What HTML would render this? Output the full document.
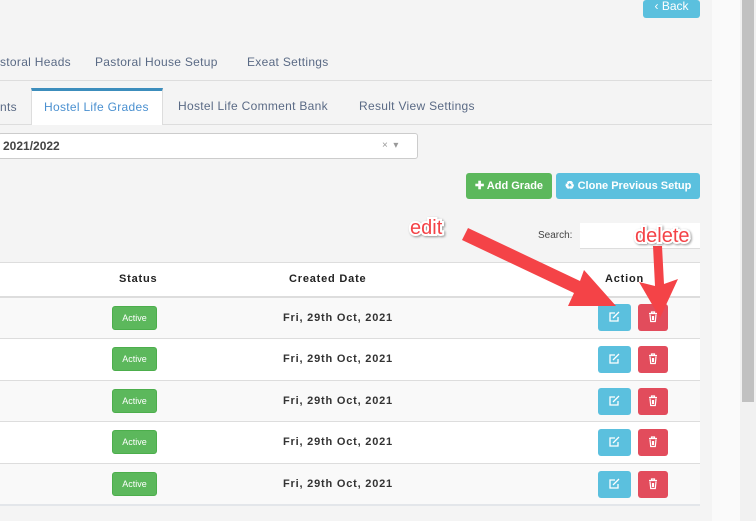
<!DOCTYPE html>
<html><head><style>
*{margin:0;padding:0;box-sizing:border-box}
body{width:756px;height:521px;background:#f4f4f4;font-family:"Liberation Sans",sans-serif;position:relative;overflow:hidden}
.abs{position:absolute}
.tab{position:absolute;font-size:12px;color:#5a6a85;letter-spacing:.3px}
.btn{position:absolute;color:#fff;font-size:11px;font-weight:bold;border-radius:3px;text-align:center}
.row{position:absolute;left:0;width:700px;border-bottom:1px solid #ddd}
.badge{position:absolute;left:112px;width:45px;height:24px;background:#5cb85c;border:1px solid #4cae4c;border-radius:3px;color:#fff;font-size:9px;text-align:center;line-height:22px}
.date{position:absolute;left:283px;font-size:11px;font-weight:bold;color:#333;letter-spacing:.8px}
.e{position:absolute;left:598px;width:33px;height:27px;background:#5bc0de;border-radius:3px}
.d{position:absolute;left:638px;width:30px;height:27px;background:#e24c5c;border-radius:3px}
</style></head><body>
<div class="abs" style="left:712px;top:0;width:28px;height:521px;background:#fafafa"></div>
<div class="abs" style="left:740px;top:0;width:16px;height:521px;background:#f1f1f1"></div>
<div class="abs" style="left:742px;top:0;width:12px;height:402px;background:#c1c1c1"></div>
<div class="btn" style="left:643px;top:0;width:57px;height:18px;background:#5bc0de;font-size:12px;line-height:12px;font-weight:normal">‹ Back</div>

<div class="tab" style="left:0;top:55px">storal Heads</div>
<div class="tab" style="left:95px;top:55px">Pastoral House Setup</div>
<div class="tab" style="left:247px;top:55px">Exeat Settings</div>
<div class="abs" style="left:0;top:80px;width:712px;height:1px;background:#ddd"></div>
<div class="abs" style="left:0;top:124px;width:712px;height:1px;background:#ddd"></div>
<div class="abs" style="left:31px;top:88px;width:132px;height:37px;background:#fff;border-top:3px solid #3c8dbc;border-left:1px solid #ddd;border-right:1px solid #ddd"></div>
<div class="tab" style="left:0;top:100px">nts</div>
<div class="tab" style="left:44px;top:100px;color:#4a90d0">Hostel Life Grades</div>
<div class="tab" style="left:178px;top:99px">Hostel Life Comment Bank</div>
<div class="tab" style="left:359px;top:99px">Result View Settings</div>
<div class="abs" style="left:-2px;top:133px;width:420px;height:26px;background:#fff;border:1px solid #ccc;border-radius:3px"></div>
<div class="abs" style="left:3px;top:139px;font-size:12px;font-weight:bold;color:#444">2021/2022</div>
<div class="abs" style="left:382px;top:140px;font-size:10px;color:#999">× &nbsp;▾</div>

<div class="btn" style="left:466px;top:173px;width:86px;height:26px;line-height:26px;background:#5cb85c">✚ Add Grade</div>
<div class="btn" style="left:556px;top:173px;width:144px;height:26px;line-height:26px;background:#5bc0de">♻ Clone Previous Setup</div>

<div class="abs" style="left:538px;top:230px;font-size:10px;color:#444">Search:</div>
<div class="abs" style="left:580px;top:223px;width:120px;height:26px;background:#fff;border-bottom:1px solid #ddd"></div>

<div class="row" style="top:262px;height:36px;background:#fff;border-top:1px solid #ddd;border-bottom:2px solid #ddd"></div>
<div class="abs" style="left:119px;top:273px;font-size:11px;font-weight:bold;color:#222;letter-spacing:.8px">Status</div>
<div class="abs" style="left:289px;top:273px;font-size:11px;font-weight:bold;color:#222;letter-spacing:.8px">Created Date</div>
<div class="abs" style="left:605px;top:273px;font-size:11px;font-weight:bold;color:#222;letter-spacing:.8px">Action</div>
<div class="row" style="top:298px;height:41px;background:#f9f9f9"></div>
<div class="row" style="top:339px;height:42px;background:#fff"></div>
<div class="row" style="top:381px;height:41px;background:#f9f9f9"></div>
<div class="row" style="top:422px;height:42px;background:#fff"></div>
<div class="row" style="top:464px;height:42px;background:#f9f9f9;border-bottom:2px solid #e3e6ea"></div>

<div class="badge" style="top:306px">Active</div><div class="date" style="top:312px">Fri, 29th Oct, 2021</div>
<div class="badge" style="top:347px">Active</div><div class="date" style="top:353px">Fri, 29th Oct, 2021</div>
<div class="badge" style="top:389px">Active</div><div class="date" style="top:395px">Fri, 29th Oct, 2021</div>
<div class="badge" style="top:430px">Active</div><div class="date" style="top:436px">Fri, 29th Oct, 2021</div>
<div class="badge" style="top:472px">Active</div><div class="date" style="top:478px">Fri, 29th Oct, 2021</div>

<div class="e" style="top:304px"></div><div class="d" style="top:304px"></div>
<div class="e" style="top:346px"></div><div class="d" style="top:346px"></div>
<div class="e" style="top:388px"></div><div class="d" style="top:388px"></div>
<div class="e" style="top:429px"></div><div class="d" style="top:429px"></div>
<div class="e" style="top:471px"></div><div class="d" style="top:471px"></div>

<svg class="abs" style="left:0;top:0" width="756" height="521">
<g fill="none" stroke="#fff" stroke-width="1.3">
<path id="pe" d="M615 313h-5v8h8v-4M613 318l6-6"/>
<use href="#pe" y="42"/><use href="#pe" y="84"/><use href="#pe" y="125"/><use href="#pe" y="167"/>
</g>
<g fill="none" stroke="#fff" stroke-width="1.2">
<path id="pd" d="M649 313.5h8M651.5 313.5v-1.5h3v1.5M650 314.5l.7 7h4.6l.7-7M652.5 316v4M653.5 316v4"/>
<use href="#pd" y="42"/><use href="#pd" y="84"/><use href="#pd" y="125"/><use href="#pd" y="167"/>
</g>
<g fill="#f44347" stroke="#fff" stroke-width="0" >
<polygon points="462,240 468,228 580,281 584,270 616,306 568,306 574,293"/>
<polygon points="653,246 662,246 664,284 678,279 660,318 639,282 655,286"/>
</g>
<text x="410" y="234" font-family="Liberation Sans" font-size="20" fill="#f44347" stroke="#fff" stroke-width="4" paint-order="stroke" style="filter:drop-shadow(1px 1px 1px rgba(0,0,0,.4))">edit</text>
<text x="635" y="242" font-family="Liberation Sans" font-size="20" fill="#f44347" stroke="#fff" stroke-width="4" paint-order="stroke" style="filter:drop-shadow(1px 1px 1px rgba(0,0,0,.4))">delete</text>
</svg>
</body></html>
